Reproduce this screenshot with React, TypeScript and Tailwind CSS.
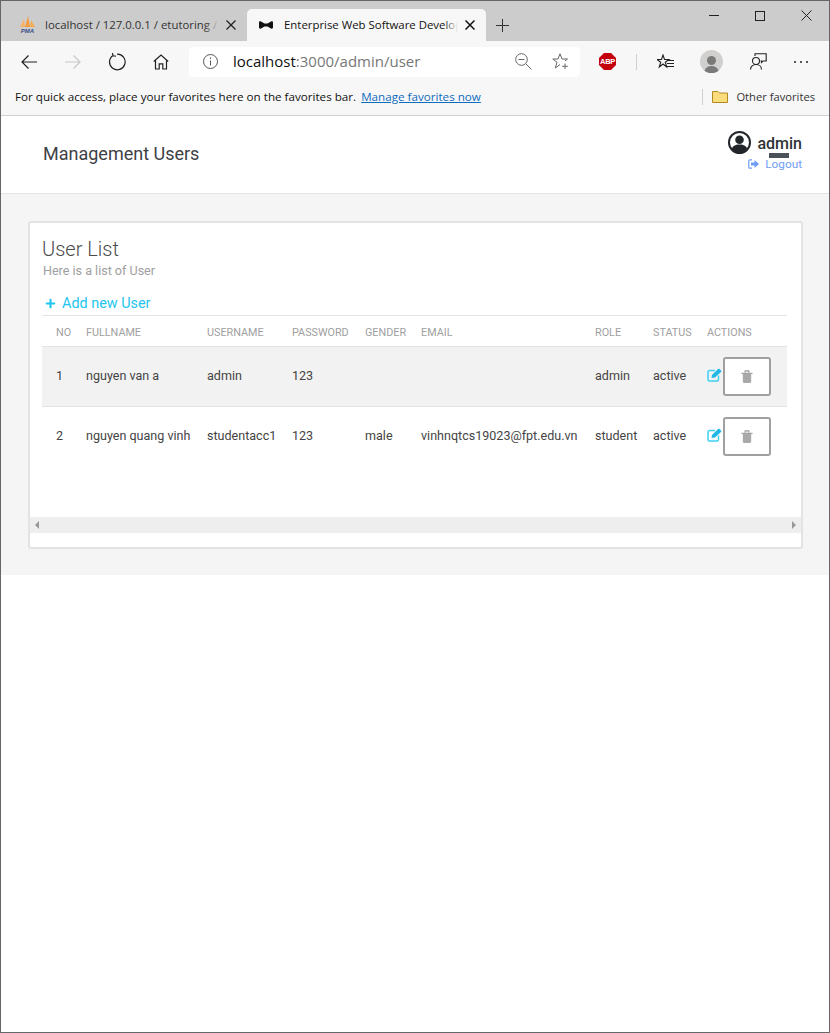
import { FaPlus } from "react-icons/fa";

const users = [
  { no: 1, fullname: "nguyen van a", username: "admin", password: "123", gender: "", email: "", role: "admin", status: "active" },
  { no: 2, fullname: "nguyen quang vinh", username: "studentacc1", password: "123", gender: "male", email: "vinhnqtcs19023@fpt.edu.vn", role: "student", status: "active" },
];

const columns = ["NO", "FULLNAME", "USERNAME", "PASSWORD", "GENDER", "EMAIL", "ROLE", "STATUS", "ACTIONS"];

function TabStrip() {
  return (
    <div className="flex h-[40px] items-end bg-[#cccccc]">
      {/* Inactive tab */}
      <div className="flex h-[32px] w-[246px] shrink-0 items-center pl-[18px]">
        <div className="flex h-[18px] w-[17px] shrink-0 flex-col items-center">
          <svg className="h-[12px] w-[15px] shrink-0" viewBox="0 0 15 12">
            <path d="M0 11 4 3 5 11Z" fill="#f7b267" />
            <path d="M5 11 8 0 10 11Z" fill="#f49b3f" />
            <path d="M10 11 11 4 15 11Z" fill="#f7a950" />
          </svg>
          <span className="font-['Liberation_Sans',sans-serif] text-[6px] leading-[6px] font-bold text-[#3a4f86] italic">PMA</span>
        </div>
        <div className="relative ml-[9px] w-[174px] overflow-hidden whitespace-nowrap text-[11.4px] text-[#333333]">
          localhost / 127.0.0.1 / etutoring / user
          <div className="absolute inset-y-0 right-0 w-[14px] bg-gradient-to-r from-transparent to-[#cccccc]" />
        </div>
        <svg className="ml-[7px] h-[10px] w-[10px] shrink-0" viewBox="0 0 10 10" stroke="#222222" strokeWidth="1.3">
          <path d="M0.5 0.5 9.5 9.5M9.5 0.5 0.5 9.5" />
        </svg>
      </div>
      {/* Active tab */}
      <div className="flex h-[32px] w-[239px] shrink-0 items-center rounded-t-[5px] bg-[#f7f7f7] pl-[12px]">
        <svg className="h-[8px] w-[14px] shrink-0" viewBox="0 0 14 8" fill="#111111">
          <path d="M0 1.5C0 .5 1 0 2 .5L5.5 2.5H8.5L12 .5C13 0 14 .5 14 1.5V6.5C14 7.5 13 8 12 7.5L8.5 5.5H5.5L2 7.5C1 8 0 7.500 0 6.500Z" />
        </svg>
        <div className="relative ml-[11px] w-[174px] overflow-hidden whitespace-nowrap text-[11.4px] text-[#111111]">
          Enterprise Web Software Development
          <div className="absolute inset-y-0 right-0 w-[14px] bg-gradient-to-r from-transparent to-[#f7f7f7]" />
        </div>
        <svg className="ml-[7px] h-[10px] w-[10px] shrink-0" viewBox="0 0 10 10" stroke="#111111" strokeWidth="1.5">
          <path d="M0.5 0.500 9.500 9.500M9.500 0.500 0.500 9.500" />
        </svg>
      </div>
      {/* New tab */}
      <div className="flex h-[32px] w-[33px] shrink-0 items-center justify-center">
        <svg className="h-[13px] w-[13px]" viewBox="0 0 13 13" stroke="#333333" strokeWidth="1">
          <path d="M6.500 0V13M0 6.500H13" />
        </svg>
      </div>
      {/* Window controls */}
      <div className="ml-auto flex h-full items-start">
        <div className="flex h-[29px] w-[46px] items-center justify-center">
          <div className="h-px w-[10px] bg-[#222222]" />
        </div>
        <div className="flex h-[29px] w-[46px] items-center justify-center">
          <div className="h-[10px] w-[10px] border border-[#222222]" />
        </div>
        <div className="flex h-[29px] w-[46px] items-center justify-center">
          <svg className="h-[11px] w-[11px]" viewBox="0 0 11 11" stroke="#222222" strokeWidth="1">
            <path d="M0.500 0.500 10.500 10.500M10.500 0.500 0.500 10.500" />
          </svg>
        </div>
      </div>
    </div>
  );
}

function ToolbarIcon({ width, children }: { width: string; children: React.ReactNode }) {
  return <div className={`flex h-[30px] shrink-0 items-center justify-center ${width}`}>{children}</div>;
}

function Toolbar() {
  return (
    <div className="flex h-[41px] items-center bg-[#f7f7f7] pl-[6px]">
      <ToolbarIcon width="w-[44px]">
        <svg className="h-[16px] w-[16px]" viewBox="0 0 16 16" fill="none" stroke="#222222" strokeWidth="1.2">
          <path d="M16 8H1M7.500 1.500 1 8l6.500 6.500" />
        </svg>
      </ToolbarIcon>
      <ToolbarIcon width="w-[44px]">
        <svg className="h-[16px] w-[16px]" viewBox="0 0 16 16" fill="none" stroke="#c8c8c8" strokeWidth="1.2">
          <path d="M0 8H15M8.500 1.500 15 8l-6.500 6.500" />
        </svg>
      </ToolbarIcon>
      <ToolbarIcon width="w-[44px]">
        <svg className="h-[18px] w-[18px]" viewBox="0 0 18 18" fill="none" stroke="#222222" strokeWidth="1.2">
          <path d="M5 2.500A7.800 7.800 0 1 0 9 1.200M4.500 0 5 2.800 8 3.200" />
        </svg>
      </ToolbarIcon>
      <ToolbarIcon width="w-[44px]">
        <svg className="h-[16px] w-[16px]" viewBox="0 0 16 16" fill="none" stroke="#222222" strokeWidth="1.2">
          <path d="M.8 7.500 8 1l7.200 6.500M2.500 6.500V15H6.200V9.800H9.800V15H13.500V6.500" />
        </svg>
      </ToolbarIcon>
      <div className="ml-[6px] flex h-[30px] w-[391px] shrink-0 items-center rounded-[4px] bg-white pl-[14px]">
        <svg className="h-[15px] w-[15px] shrink-0" viewBox="0 0 15 15" fill="none" stroke="#555555" strokeWidth="1">
          <circle cx="7.500" cy="7.500" r="7" />
          <path d="M7.500 6.500V11.500M7.500 3.500V5" />
        </svg>
        <div className="ml-[15px] text-[15px] text-[#777777]">
          <span className="text-[#111111]">localhost</span>:3000/admin/user
        </div>
        <svg className="ml-[95px] h-[17px] w-[17px] shrink-0" viewBox="0 0 17 17" fill="none" stroke="#666666" strokeWidth="1">
          <circle cx="6.500" cy="6.500" r="5.800" />
          <path d="M3.500 6.500H9.500M10.800 10.800 16.500 16.500" />
        </svg>
        <svg className="ml-auto mr-[11px] h-[17px] w-[17px] shrink-0" viewBox="0 0 17 17" fill="none" stroke="#666666" strokeWidth="1">
          <path d="M13 8 15.500 6H10L8 .8 6 6H.8L5 9.300 3.300 15 8 11.500" />
          <path d="M13 10.500V16M10.200 13.300H15.800" />
        </svg>
      </div>
      <ToolbarIcon width="ml-[5px] w-[44px]">
        <svg className="h-[17px] w-[17px]" viewBox="0 0 17 17">
          <polygon points="5,0 12,0 17,5 17,12 12,17 5,17 0,12 0,5" fill="#c4000c" />
          <text x="8.500" y="11.200" textAnchor="middle" fontFamily="Liberation Sans, sans-serif" fontSize="7.500" fontWeight="700" fill="#ffffff" letterSpacing="-0.3">
            ABP
          </text>
        </svg>
      </ToolbarIcon>
      <div className="ml-[7px] h-[16px] w-px bg-[#cfcfcf]" />
      <ToolbarIcon width="ml-[6px] w-[44px]">
        <svg className="h-[16px] w-[17px]" viewBox="0 0 17 16" fill="none" stroke="#222222" strokeWidth="1.100">
          <path d="M6 1 7.500 5.500H12L8.300 8.200 9.700 13 6 10 2.300 13 3.700 8.200 0 5.500H4.500Z" />
          <path d="M10 6.500H17M10 9.500H17M10 12.500H17" />
        </svg>
      </ToolbarIcon>
      <ToolbarIcon width="ml-[2px] w-[44px]">
        <div className="flex h-[23px] w-[23px] flex-col items-center justify-end overflow-hidden rounded-full bg-[#d2d0ce]">
          <div className="mb-px h-[9px] w-[9px] rounded-full bg-[#7a7a7a]" />
          <div className="h-[7px] w-[15px] rounded-t-full bg-[#7a7a7a]" />
        </div>
      </ToolbarIcon>
      <ToolbarIcon width="ml-[3px] w-[44px]">
        <svg className="h-[17px] w-[17px]" viewBox="0 0 17 17" fill="none" stroke="#222222" strokeWidth="1.100">
          <circle cx="6" cy="8" r="3.500" />
          <path d="M.5 16.500C.5 13.500 3 11.500 6 11.500S11.500 13.500 11.500 16.500" />
          <path d="M5 3V.8H16.200V8H13L11.500 9.500V8H10.500" />
        </svg>
      </ToolbarIcon>
      <ToolbarIcon width="ml-[-1px] w-[44px]">
        <div className="flex gap-[4px]">
          <div className="h-[2px] w-[2px] rounded-full bg-[#222222]" />
          <div className="h-[2px] w-[2px] rounded-full bg-[#222222]" />
          <div className="h-[2px] w-[2px] rounded-full bg-[#222222]" />
        </div>
      </ToolbarIcon>
    </div>
  );
}

function FavoritesBar() {
  return (
    <div className="flex h-[34px] items-center border-b border-[#d2d2d2] bg-[#f7f7f7] pb-[3px] pl-[14px] pr-[14px] text-[11.65px]">
      <span className="text-[#111111]">For quick access, place your favorites here on the favorites bar.</span>
      <a className="ml-[5px] text-[#0f6cbd] underline">Manage favorites now</a>
      <div className="ml-auto h-[16px] w-px bg-[#cfcfcf]" />
      <svg className="ml-[9px] h-[12px] w-[16px] shrink-0" viewBox="0 0 16 12">
        <path d="M.5 .5H6L7.500 2H15.500V11.500H.5Z" fill="#fbdc7c" stroke="#b38a1e" />
      </svg>
      <span className="ml-[8px] text-[11.2px] text-[#333333]">Other favorites</span>
    </div>
  );
}

function EditIcon() {
  return (
    <svg className="mb-[3px] h-[14px] w-[15px] shrink-0" viewBox="0 0 15 14" fill="none">
      <path d="M11.500 7.500V11.500C11.500 12.300 10.800 13 10 13H2.500C1.700 13 1 12.300 1 11.500V4C1 3.200 1.700 2.500 2.500 2.500H8" stroke="#3fd0f2" strokeWidth="1.500" />
      <path d="M4.500 10 5 7 11 1C11.500 .5 12 .5 12.500 1L14 2.500C14.500 3 14.500 3.500 14 4L8 9.500Z" fill="#22b8e6" />
    </svg>
  );
}

function TrashIcon() {
  return (
    <svg className="mb-px h-[13px] w-[12px] shrink-0" viewBox="0 0 12 14">
      <path d="M0 3H12V4.200H0Z" fill="#9a9a9a" />
      <path d="M4 3V1H8V3" fill="none" stroke="#9a9a9a" strokeWidth="1.200" />
      <path d="M1.500 4.200H10.500V12.500C10.500 13.300 10 14 9.200 14H2.800C2 14 1.500 13.300 1.500 12.500Z" fill="#a9a9a9" />
    </svg>
  );
}

function UserTable() {
  return (
    <table className="w-[745px] table-fixed border-collapse text-[12.55px] text-[#444444]">
      <colgroup>
        <col className="w-[30px]" />
        <col className="w-[121px]" />
        <col className="w-[85px]" />
        <col className="w-[73px]" />
        <col className="w-[56px]" />
        <col className="w-[174px]" />
        <col className="w-[58px]" />
        <col className="w-[54px]" />
        <col className="w-[94px]" />
      </colgroup>
      <thead>
        <tr className="h-[31px] border-y border-[#e3e3e3]">
          {columns.map((c) => (
            <th key={c} className="pl-[14px] pt-[4px] text-left text-[10.8px] font-normal whitespace-nowrap text-[#a0a0a0]">
              {c}
            </th>
          ))}
        </tr>
      </thead>
      <tbody>
        {users.map((u) => (
          <tr key={u.no} className="h-[60px] border-b border-[#e3e3e3] last:border-b-0 odd:bg-[#f2f2f2]">
            <td className="pl-[14px]">{u.no}</td>
            <td className="pl-[14px] whitespace-nowrap">{u.fullname}</td>
            <td className="pl-[14px]">{u.username}</td>
            <td className="pl-[14px]">{u.password}</td>
            <td className="pl-[14px]">{u.gender}</td>
            <td className="pl-[14px] whitespace-nowrap">{u.email}</td>
            <td className="pl-[14px]">{u.role}</td>
            <td className="pl-[14px]">{u.status}</td>
            <td className="pl-[14px]">
              <div className="flex items-center">
                <EditIcon />
                <button className="ml-px flex h-[39px] w-[48px] shrink-0 items-center justify-center rounded-[3px] border-2 border-[#a0a0a0] bg-white">
                  <TrashIcon />
                </button>
              </div>
            </td>
          </tr>
        ))}
      </tbody>
    </table>
  );
}

export default function App() {
  return (
    <div className="flex h-[1033px] w-[830px] flex-col border border-[#666666] bg-white font-['Open_Sans',sans-serif]">
      <TabStrip />
      <Toolbar />
      <FavoritesBar />

      <div className="font-['Roboto',sans-serif]">
        {/* Header */}
        <header className="flex h-[78px] items-start justify-between border-b border-[#e5e5e5] bg-white pl-[42px] pr-[27px]">
          <h1 className="mt-[26px] text-[18px] leading-[24px] text-[#3d4145]">Management Users</h1>
          <div className="mt-[14px] flex flex-col items-end">
            <div className="relative flex items-center">
              <svg className="h-[23px] w-[23px]" viewBox="0 0 23 23" fill="#22262a">
                <path fillRule="evenodd" d="M11.500 0A11.500 11.500 0 1 1 11.500 23A11.500 11.500 0 1 1 11.500 0ZM11.500 2A9.500 9.500 0 1 0 11.500 21A9.500 9.500 0 1 0 11.500 2Z" />
                <circle cx="11.500" cy="8.800" r="4.300" />
                <path d="M3.800 18.200C4.500 15 7 13.500 11.500 13.500S18.500 15 19.200 18.200C17 20.500 14.500 21.500 11.500 21.500S6 20.500 3.800 18.200Z" />
              </svg>
              <span className="ml-[6px] mt-[4px] text-[16px] leading-[20px] font-medium text-[#2f3337]">admin</span>
              <div className="absolute bottom-[-4px] right-[13px] h-[5px] w-[20px] bg-[#4b5159]" />
            </div>
            <a className="mt-[3px] flex items-center text-[11.8px] leading-[14px] text-[#6f9df5]">
              <svg className="mr-[6px] h-[10px] w-[11px]" viewBox="0 0 11 10" fill="none">
                <path d="M4 .8H1.800C1.200 .8 .8 1.200 .8 1.800V8.200C.8 8.800 1.200 9.200 1.800 9.200H4" stroke="#6f9df5" strokeWidth="1.200" />
                <path d="M3 3.500H6.500V1L11 5 6.500 9V6.500H3Z" fill="#6f9df5" />
              </svg>
              Logout
            </a>
          </div>
        </header>

        {/* Content */}
        <main className="bg-[#f5f5f5] pb-[26px] pl-[27px] pr-[26px] pt-[27px]">
          <div className="h-[328px] rounded-[3px] border-2 border-[#e3e3e3] bg-white">
            <div className="px-[12px] pt-[13px]">
              <h2 className="text-[20px] leading-[26px] font-light text-[#4a4a4a]">User List</h2>
              <p className="mt-[2px] pl-px text-[12.55px] leading-[14px] text-[#a0a0a0]">Here is a list of User</p>
              <a className="mt-[16px] flex h-[19px] items-center pl-[3px] text-[14.4px] text-[#22c5ee]">
                <FaPlus className="mr-[6px] h-[11px] w-[11px]" />
                Add new User
              </a>
              <div className="mt-[2px] h-[202px]">
                <UserTable />
              </div>
            </div>
            {/* Scrollbar */}
            <div className="flex h-[16px] items-center justify-between bg-[#eeeeee] px-[5px]">
              <div className="h-0 w-0 border-y-[4px] border-r-[4px] border-y-transparent border-r-[#999999]" />
              <div className="h-0 w-0 border-y-[4px] border-l-[4px] border-y-transparent border-l-[#999999]" />
            </div>
          </div>
        </main>
      </div>
    </div>
  );
}
